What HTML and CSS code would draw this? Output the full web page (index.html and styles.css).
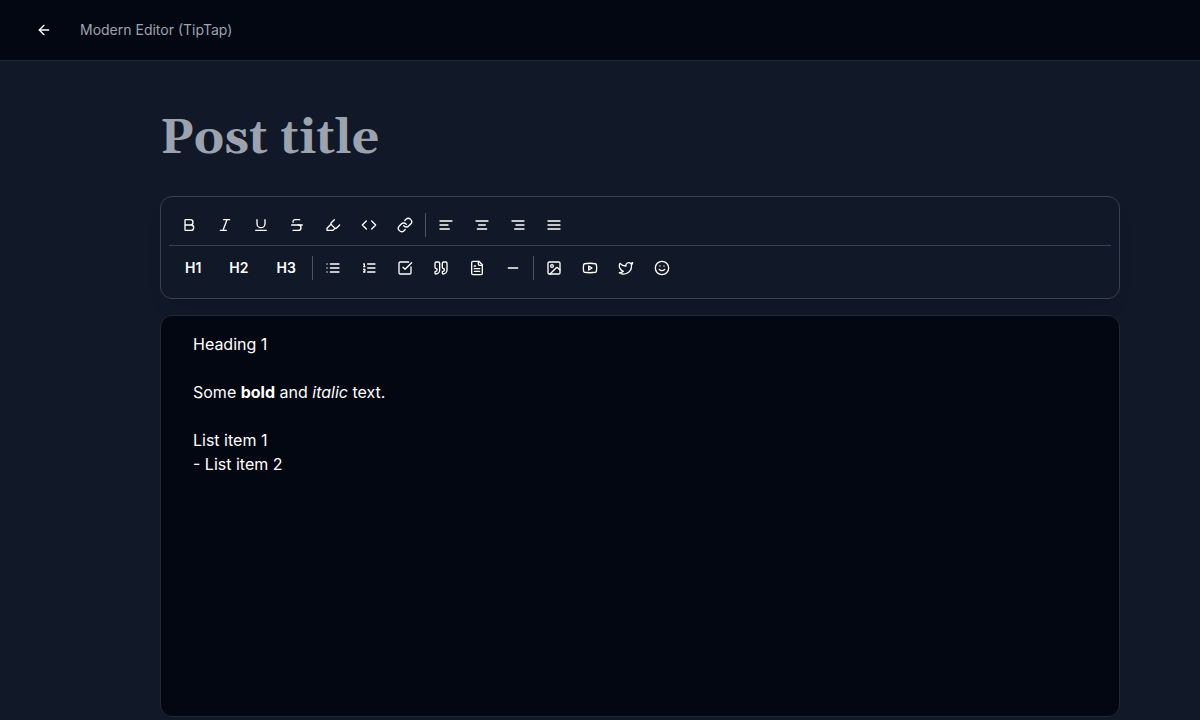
FILE: index.html
```html
<!DOCTYPE html>
<html lang="en">
<head>
<meta charset="utf-8">
<title>Modern Editor</title>
<link rel="stylesheet" href="styles.css">
</head>
<body>
<header class="topbar">
  <button class="icon-btn" type="button" aria-label="Back"><svg class="icon" viewBox="0 0 24 24"><path d="m12 19-7-7 7-7"/><path d="M19 12H5"/></svg></button>
  <span class="topbar-label">Modern Editor (TipTap)</span>
</header>
<main class="page">
  <input class="title" type="text" placeholder="Post title" aria-label="Post title">
  <div class="toolbar" role="toolbar" aria-label="Formatting">
    <div class="row row-top">
      <button class="icon-btn" type="button" aria-label="Bold"><svg class="icon" viewBox="0 0 24 24"><path d="M6 12h9a4 4 0 0 1 0 8H7a1 1 0 0 1-1-1V5a1 1 0 0 1 1-1h7a4 4 0 0 1 0 8"/></svg></button>
      <button class="icon-btn" type="button" aria-label="Italic"><svg class="icon" viewBox="0 0 24 24"><path d="M19 4h-9M14 20H5M15 4 9 20"/></svg></button>
      <button class="icon-btn" type="button" aria-label="Underline"><svg class="icon" viewBox="0 0 24 24"><path d="M6 4v6a6 6 0 0 0 12 0V4M4 20h16"/></svg></button>
      <button class="icon-btn" type="button" aria-label="Strikethrough"><svg class="icon" viewBox="0 0 24 24"><path d="M16 4H9a3 3 0 0 0-2.83 4"/><path d="M14 12a4 4 0 0 1 0 8H6"/><path d="M4 12h16"/></svg></button>
      <button class="icon-btn" type="button" aria-label="Highlight"><svg class="icon" viewBox="0 0 24 24"><path d="m9 11-6 6v3h9l3-3"/><path d="m22 12-4.6 4.6a2 2 0 0 1-2.8 0l-5.2-5.2a2 2 0 0 1 0-2.8L14 4"/></svg></button>
      <button class="icon-btn" type="button" aria-label="Code"><svg class="icon" viewBox="0 0 24 24"><path d="m16 18 6-6-6-6M8 6l-6 6 6 6"/></svg></button>
      <button class="icon-btn" type="button" aria-label="Link"><svg class="icon" viewBox="0 0 24 24"><path d="M10 13a5 5 0 0 0 7.54.54l3-3a5 5 0 0 0-7.07-7.07l-1.72 1.71"/><path d="M14 11a5 5 0 0 0-7.54-.54l-3 3a5 5 0 0 0 7.07 7.07l1.71-1.71"/></svg></button>
      <span class="divider"></span>
      <button class="icon-btn" type="button" aria-label="Align left"><svg class="icon" viewBox="0 0 24 24"><path d="M21 6H3M15 12H3M17 18H3"/></svg></button>
      <button class="icon-btn" type="button" aria-label="Align center"><svg class="icon" viewBox="0 0 24 24"><path d="M21 6H3M17 12H7M19 18H5"/></svg></button>
      <button class="icon-btn" type="button" aria-label="Align right"><svg class="icon" viewBox="0 0 24 24"><path d="M21 6H3M21 12H9M21 18H7"/></svg></button>
      <button class="icon-btn" type="button" aria-label="Justify"><svg class="icon" viewBox="0 0 24 24"><path d="M3 6h18M3 12h18M3 18h18"/></svg></button>
    </div>
    <div class="row row-bottom">
      <button class="text-btn" type="button">H1</button>
      <button class="text-btn" type="button">H2</button>
      <button class="text-btn" type="button">H3</button>
      <span class="divider"></span>
      <button class="icon-btn" type="button" aria-label="Bullet list"><svg class="icon" viewBox="0 0 24 24"><path d="M3 12h.01M3 18h.01M3 6h.01M8 12h13M8 18h13M8 6h13"/></svg></button>
      <button class="icon-btn" type="button" aria-label="Numbered list"><svg class="icon" viewBox="0 0 24 24"><path d="M10 12h11M10 18h11M10 6h11M4 10h2M4 6h1v4M6 18H4c0-1 2-2 2-3s-1-1.500-2-1"/></svg></button>
      <button class="icon-btn" type="button" aria-label="Task list"><svg class="icon" viewBox="0 0 24 24"><path d="M21 10.500V19a2 2 0 0 1-2 2H5a2 2 0 0 1-2-2V5a2 2 0 0 1 2-2h12.500"/><path d="m9 11 3 3L22 4"/></svg></button>
      <button class="icon-btn" type="button" aria-label="Quote"><svg class="icon" viewBox="0 0 24 24"><path d="M16 3a2 2 0 0 0-2 2v6a2 2 0 0 0 2 2 1 1 0 0 1 1 1v1a2 2 0 0 1-2 2 1 1 0 0 0-1 1v2a1 1 0 0 0 1 1 6 6 0 0 0 6-6V5a2 2 0 0 0-2-2z"/><path d="M5 3a2 2 0 0 0-2 2v6a2 2 0 0 0 2 2 1 1 0 0 1 1 1v1a2 2 0 0 1-2 2 1 1 0 0 0-1 1v2a1 1 0 0 0 1 1 6 6 0 0 0 6-6V5a2 2 0 0 0-2-2z"/></svg></button>
      <button class="icon-btn" type="button" aria-label="Code block"><svg class="icon" viewBox="0 0 24 24"><path d="M15 2H6a2 2 0 0 0-2 2v16a2 2 0 0 0 2 2h12a2 2 0 0 0 2-2V7Z"/><path d="M14 2v4a2 2 0 0 0 2 2h4M10 9H8M16 13H8M16 17H8"/></svg></button>
      <button class="icon-btn" type="button" aria-label="Horizontal rule"><svg class="icon" viewBox="0 0 24 24"><path d="M5 12h14"/></svg></button>
      <span class="divider"></span>
      <button class="icon-btn" type="button" aria-label="Image"><svg class="icon" viewBox="0 0 24 24"><rect x="3" y="3" width="18" height="18" rx="2"/><circle cx="9" cy="9" r="2"/><path d="m21 15-3.090-3.090a2 2 0 0 0-2.820 0L6 21"/></svg></button>
      <button class="icon-btn" type="button" aria-label="Video"><svg class="icon" viewBox="0 0 24 24"><path d="M2.500 17a24.120 24.120 0 0 1 0-10 2 2 0 0 1 1.400-1.400 49.560 49.560 0 0 1 16.200 0A2 2 0 0 1 21.500 7a24.120 24.120 0 0 1 0 10 2 2 0 0 1-1.400 1.400 49.550 49.550 0 0 1-16.200 0A2 2 0 0 1 2.500 17"/><path d="m10 15 5-3-5-3z"/></svg></button>
      <button class="icon-btn" type="button" aria-label="Tweet"><svg class="icon" viewBox="0 0 24 24"><path d="M22 4s-.7 2.100-2 3.400c1.600 10-9.400 17.300-18 11.600 2.200.1 4.400-.6 6-2C3 15.500.5 9.600 3 5c2.200 2.600 5.600 4.100 9 4-.9-4.200 4-6.600 7-3.800 1.100 0 3-1.200 3-1.200z"/></svg></button>
      <button class="icon-btn" type="button" aria-label="Emoji"><svg class="icon" viewBox="0 0 24 24"><circle cx="12" cy="12" r="10"/><path d="M8 14s1.500 2 4 2 4-2 4-2M9 9h.01M15 9h.01"/></svg></button>
    </div>
  </div>
  <div class="editor" contenteditable="true" role="textbox" aria-multiline="true" aria-label="Post body" spellcheck="false">
    <p>Heading 1</p>
    <p>Some <strong>bold</strong> and <em>italic</em> text.</p>
    <p>List item 1<br>- List item 2</p>
  </div>
</main>
</body>
</html>
```

FILE: styles.css
```css
* {
  box-sizing: border-box;
}

body {
  margin: 0;
  background: #111827;
  color: #ffffff;
  font-family: Inter, "Liberation Sans", sans-serif;
  font-size: 16px;
  line-height: 24px;
}

button {
  padding: 0;
  border: 0;
  background: none;
  color: inherit;
  font: inherit;
  cursor: pointer;
}

.topbar {
  display: flex;
  align-items: center;
  gap: 20px;
  padding: 14px 28px;
  background: #030712;
  border-bottom: 1px solid #1f2937;
}

.topbar-label {
  color: #9ca3af;
  font-size: 14px;
  line-height: 20px;
}

.page {
  padding: 40px 80px 0 160px;
}

.title {
  display: block;
  width: 100%;
  height: 74px;
  margin-bottom: 21px;
  padding: 0;
  border: 0;
  outline: 0;
  background: none;
  color: #f9fafb;
  font-family: Georgia, Gelasio, "DejaVu Serif", serif;
  font-size: 48px;
  font-weight: 700;
}

.title::placeholder {
  color: #9ca3af;
  opacity: 1;
}

.toolbar {
  margin-bottom: 16px;
  padding: 8px;
  border: 1px solid #374151;
  border-radius: 12px;
  box-shadow: 0 10px 15px -3px rgba(0, 0, 0, 0.1);
}

.row {
  display: flex;
  flex-wrap: wrap;
  align-items: center;
  gap: 4px;
}

.row-top {
  padding: 4px;
  border-bottom: 1px solid #374151;
}

.row-bottom {
  padding: 6px 4px;
}

.icon-btn {
  display: flex;
  align-items: center;
  justify-content: center;
  width: 32px;
  height: 32px;
}

.text-btn {
  height: 32px;
  padding: 0 12px;
  font-size: 14px;
  font-weight: 600;
}

.divider {
  width: 1px;
  height: 24px;
  background: #4b5563;
}

.icon {
  width: 16px;
  height: 16px;
  fill: none;
  stroke: currentColor;
  stroke-width: 2;
  stroke-linecap: round;
  stroke-linejoin: round;
}

.editor {
  min-height: 402px;
  padding: 16px 32px;
  border: 1px solid #1f2937;
  border-radius: 12px;
  outline: 0;
  background: #030712;
}

.editor p {
  margin: 0 0 24px;
}
```
